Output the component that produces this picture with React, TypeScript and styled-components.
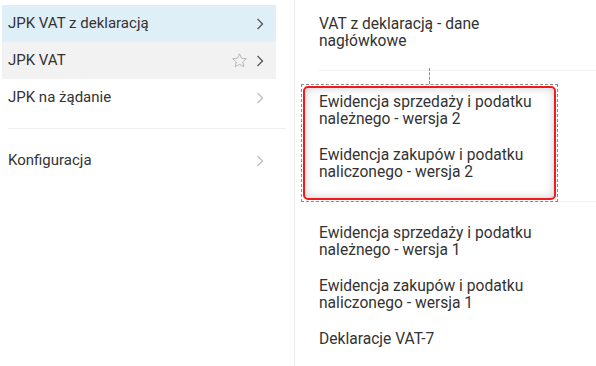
import React from "react";
import styled, { createGlobalStyle } from "styled-components";

const GlobalStyle = createGlobalStyle`
  html, body {
    margin: 0;
    padding: 0;
    background: #fff;
  }
  body {
    font-family: Roboto, "Liberation Sans", Arial, sans-serif;
    font-size: 15px;
    color: #333;
  }
`;

const Page = styled.div`
  display: flex;
  width: 596px;
  height: 366px;
  overflow: hidden;
`;

const Sidebar = styled.div`
  width: 295px;
  flex-shrink: 0;
  border-right: 1px solid #efefef;
  padding: 5px 0 0 2px;
  box-sizing: border-box;
`;

const MenuRow = styled.div<{ $tone?: "active" | "hover" }>`
  display: flex;
  align-items: center;
  width: 274px;
  height: 37px;
  padding: 0 6px;
  box-sizing: border-box;
  background: ${(p) =>
    p.$tone === "active" ? "#dfeff8" : p.$tone === "hover" ? "#f2f2f2" : "transparent"};
`;

const MenuLabel = styled.span`
  flex: 1;
  line-height: 17px;
`;

const Star = styled.svg`
  width: 17px;
  height: 17px;
  margin-right: 8px;
`;

const Chevron = styled.svg<{ $muted?: boolean }>`
  width: 8px;
  height: 12px;
  margin-right: 6px;
  color: ${(p) => (p.$muted ? "#bdbdbd" : "#555")};
`;

const Separator = styled.div`
  width: 278px;
  margin: 12px 0 13px 6px;
  border-top: 1px solid #eee;
`;

const Content = styled.div`
  flex: 1;
  padding-top: 6px;
  font-size: 15.6px;
`;

const Group = styled.div<{ $last?: boolean }>`
  margin-left: 24px;
  padding: 0 0 11px;
  border-bottom: ${(p) => (p.$last ? "none" : "1px solid #f0f0f0")};
  & + & {
    padding-top: 13px;
  }
`;

const Item = styled.div`
  padding: 10px 0 9px;
  line-height: 17px;
  max-width: 214px;
`;

const Frame = styled.div`
  position: relative;
  margin: 0 0 -12px -18px;
  width: 257px;
  box-sizing: border-box;
  border: 1px dashed #8a8a8a;
  padding: 1px;

  &::before {
    content: "";
    position: absolute;
    left: 127px;
    top: -17px;
    height: 16px;
    border-left: 1px dashed #8a8a8a;
  }
`;

const FrameInner = styled.div`
  border: 2px solid #f01a1a;
  border-radius: 5px;
  padding: 0 0 8px 14px;
  box-shadow: inset 0 0 10px rgba(0, 0, 0, 0.2);

  & > ${Item}:first-child {
    padding-top: 6px;
  }
`;

const StarIcon = () => (
  <Star viewBox="0 0 24 24" fill="none" stroke="#a8a8a8" strokeWidth="1.1">
    <path d="M12 2.5l2.9 6.3 6.8.7-5.1 4.6 1.5 6.8L12 17.4l-6.1 3.5 1.5-6.8-5.1-4.6 6.8-.7z" />
  </Star>
);

const ChevronIcon = ({ muted }: { muted?: boolean }) => (
  <Chevron $muted={muted} viewBox="0 0 8 12" fill="none" stroke="currentColor" strokeWidth="1.3">
    <path d="M1.5 1l5 5-5 5" />
  </Chevron>
);

export default function App() {
  return (
    <>
      <GlobalStyle />
      <Page>
        <Sidebar>
          <MenuRow $tone="active">
            <MenuLabel>JPK VAT z deklaracją</MenuLabel>
            <ChevronIcon />
          </MenuRow>
          <MenuRow $tone="hover">
            <MenuLabel>JPK VAT</MenuLabel>
            <StarIcon />
            <ChevronIcon />
          </MenuRow>
          <MenuRow>
            <MenuLabel>JPK na żądanie</MenuLabel>
            <ChevronIcon muted />
          </MenuRow>
          <Separator />
          <MenuRow>
            <MenuLabel>Konfiguracja</MenuLabel>
            <ChevronIcon muted />
          </MenuRow>
        </Sidebar>
        <Content>
          <Group>
            <Item>VAT z deklaracją - dane nagłówkowe</Item>
          </Group>
          <Group>
            <Frame>
              <FrameInner>
                <Item>Ewidencja sprzedaży i podatku należnego - wersja 2</Item>
                <Item>Ewidencja zakupów i podatku naliczonego - wersja 2</Item>
              </FrameInner>
            </Frame>
          </Group>
          <Group $last>
            <Item>Ewidencja sprzedaży i podatku należnego - wersja 1</Item>
            <Item>Ewidencja zakupów i podatku naliczonego - wersja 1</Item>
            <Item>Deklaracje VAT-7</Item>
          </Group>
        </Content>
      </Page>
    </>
  );
}
